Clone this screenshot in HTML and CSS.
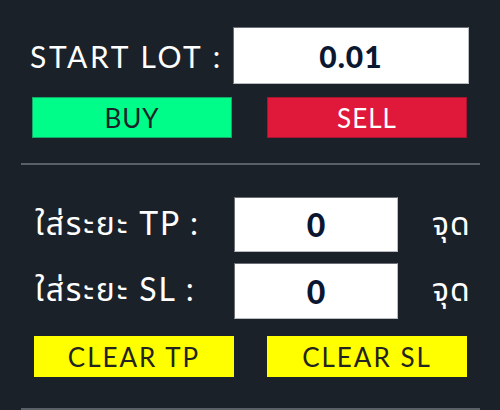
FILE: index.html
```html
<!DOCTYPE html>
<html lang="th">
<head>
<meta charset="utf-8">
<title>Lot panel</title>
<link rel="stylesheet" href="styles.css">
</head>
<body>
<div class="panel">
  <div class="lot-row">
    <span class="label">START LOT :</span>
    <div class="input lot">0.01</div>
  </div>
  <div class="btn-row trade">
    <div class="btn buy">BUY</div>
    <div class="btn sell">SELL</div>
  </div>
  <div class="sep"></div>
  <div class="field-row tp">
    <span class="label th">ใส่ระยะ TP :</span>
    <div class="input small">0</div>
    <span class="unit">จุด</span>
  </div>
  <div class="field-row sl">
    <span class="label th">ใส่ระยะ SL :</span>
    <div class="input small">0</div>
    <span class="unit">จุด</span>
  </div>
  <div class="btn-row clear">
    <div class="btn yellow">CLEAR TP</div>
    <div class="btn yellow">CLEAR SL</div>
  </div>
  <div class="sep bottom"></div>
</div>
</body>
</html>
```
FILE: styles.css
```css
* { box-sizing: border-box; }
html, body {
  margin: 0;
  padding: 0;
  width: 500px;
  height: 410px;
  overflow: hidden;
  background: #1b2129;
}
.panel {
  display: flex;
  flex-direction: column;
  font-family: Lato, "Noto Sans Thai", "Noto Sans", sans-serif;
  color: #ffffff;
}
.label {
  font-size: 30px;
  letter-spacing: 2.6px;
  color: #ffffff;
  white-space: nowrap;
}
.label.th {
  font-size: 32px;
  letter-spacing: 1.8px;
}
.lot-row {
  margin-top: 27px;
  padding-left: 30px;
  display: grid;
  grid-template-columns: 203px 236px;
  align-items: center;
}
.input {
  background: #ffffff;
  border-left: 1px solid #6b6f75;
  border-top: 1px solid #6b6f75;
  border-right: 1px solid #b9bcc0;
  border-bottom: 1px solid #b9bcc0;
  color: #0b1731;
  font-weight: 900;
  display: flex;
  align-items: center;
  justify-content: center;
  font-family: Lato, sans-serif;
}
.input.lot {
  height: 57px;
  font-size: 30px;
  letter-spacing: 1px;
}
.btn-row {
  display: flex;
}
.btn-row.trade {
  margin-top: 13px;
  padding-left: 32px;
  gap: 35px;
}
.btn {
  width: 200px;
  height: 41px;
  display: flex;
  align-items: center;
  justify-content: center;
  font-size: 26px;
  letter-spacing: 1px;
  font-family: Lato, sans-serif;
}
.buy { background: #00fd8a; color: #1b2129; border: 1px solid #13a968; }
.sell { background: #e0183a; color: #ffffff; border: 1px solid #a51530; }
.sep {
  margin-top: 25px;
  margin-left: 21px;
  width: 459px;
  height: 2px;
  background: #5b6067;
}
.field-row {
  padding-left: 35px;
  display: grid;
  grid-template-columns: 199px 164px 34px auto;
  align-items: center;
}
.field-row .input { grid-column: 2; }
.field-row .unit { grid-column: 4; font-size: 32px; letter-spacing: 1px; }
.field-row.tp { margin-top: 32px; }
.field-row.tp .input { height: 55px; }
.field-row.sl { margin-top: 11px; }
.field-row.sl .input { height: 56px; }
.input.small { font-size: 32px; }
.btn-row.clear {
  margin-top: 17px;
  padding-left: 34px;
  gap: 33px;
}
.yellow { background: #ffff00; color: #23231f; font-size: 26px; letter-spacing: 2px; }
.sep.bottom { margin-top: 31px; }
```
